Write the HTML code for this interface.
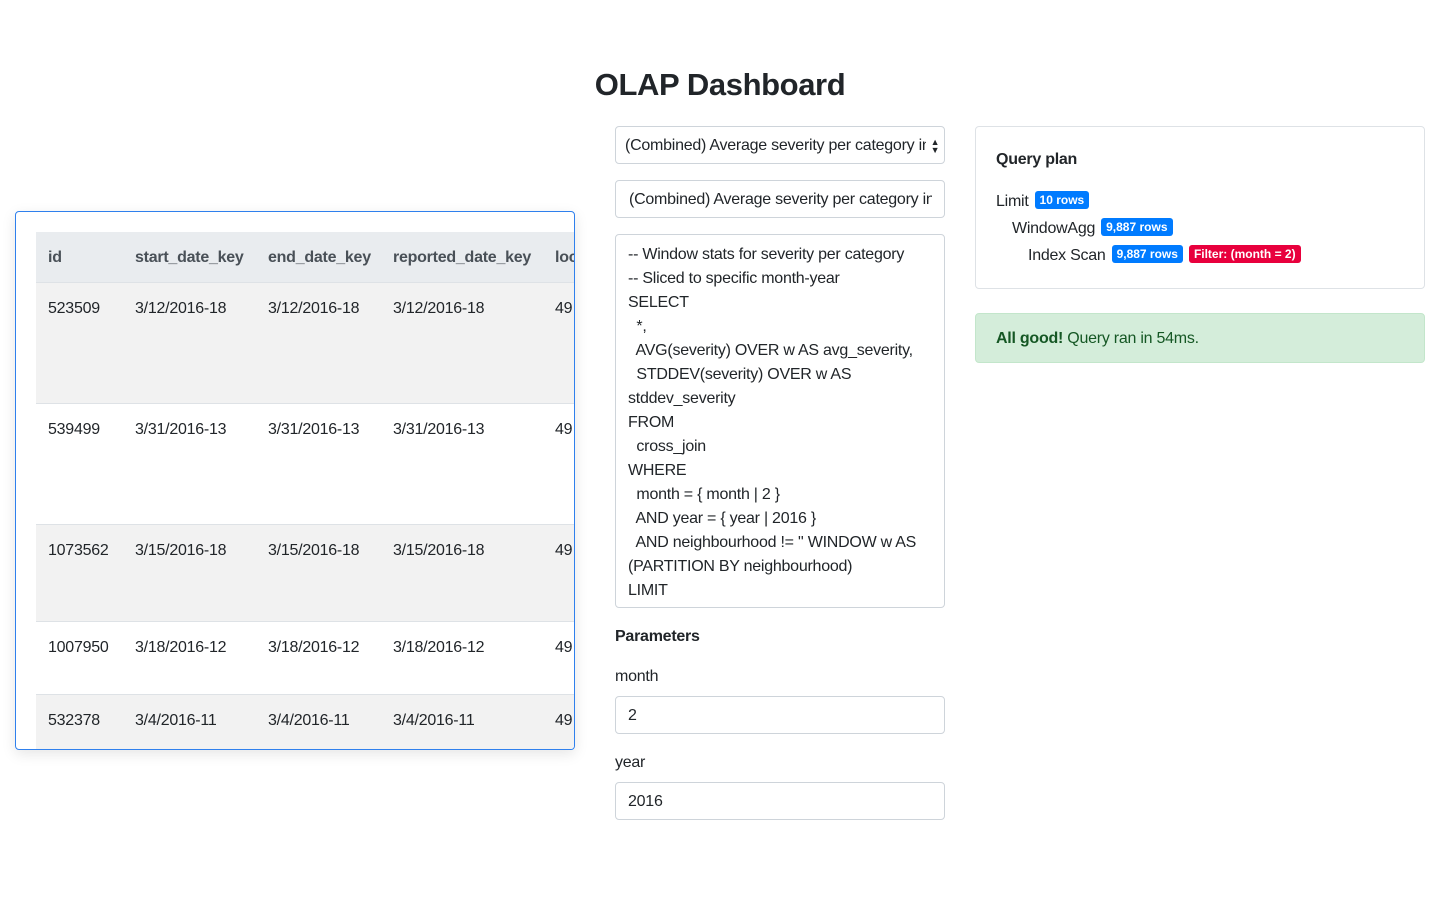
<!DOCTYPE html>
<html><head><style>
body{margin:0;width:1440px;height:900px;background:#fff;font-family:"Liberation Sans",Helvetica,sans-serif;color:#212529;font-size:16px;position:relative;overflow:hidden;letter-spacing:-0.25px}
.a{position:absolute}
h1{position:absolute;left:0;width:1440px;top:64px;margin:0;text-align:center;font-size:31px;font-weight:700;line-height:42px;letter-spacing:-0.4px}
.inp{position:absolute;left:615px;width:330px;border:1px solid #ced4da;border-radius:4px;box-sizing:border-box;padding:0 12px;line-height:38px;height:38px;white-space:nowrap;overflow:hidden;font-size:16px}
.inp .t{display:block;overflow:hidden}
.card{position:absolute;left:15px;top:211px;width:560px;height:539px;border:1px solid #2f80ed;border-radius:4px;box-sizing:border-box;box-shadow:0 4px 14px rgba(0,0,0,.1);overflow:hidden}
.row{position:absolute;left:20px;width:540px;border-top:1px solid #dee2e6}
.c{position:absolute;white-space:nowrap;top:17px}
.badge{display:inline-block;color:#fff;font-size:12px;font-weight:700;padding:0 5px;border-radius:3px;line-height:18px;vertical-align:2px;margin-left:6px;letter-spacing:0}
</style></head><body>
<h1>OLAP Dashboard</h1>
<div class="inp" style="top:126px;padding-left:9px"><span class="t" style="margin-right:6px">(Combined) Average severity per category in a specific month-year</span><span class="a" style="right:4px;top:0;width:10px;font-size:9px;line-height:8px;padding-top:11px;text-align:center">▲<br>▼</span></div>
<div class="inp" style="top:180px;padding-left:13px"><span class="t">(Combined) Average severity per category in a specific</span></div>
<div class="a" style="left:615px;top:234px;width:330px;height:374px;border:1px solid #ced4da;border-radius:4px;box-sizing:border-box;padding:8px 12px;line-height:24px;overflow:hidden;white-space:pre">-- Window stats for severity per category
-- Sliced to specific month-year
SELECT
  *,
  AVG(severity) OVER w AS avg_severity,
  STDDEV(severity) OVER w AS
stddev_severity
FROM
  cross_join
WHERE
  month = { month | 2 }
  AND year = { year | 2016 }
  AND neighbourhood != '' WINDOW w AS
(PARTITION BY neighbourhood)
LIMIT</div>
<div class="a" style="left:615px;top:628px;font-weight:700">Parameters</div>
<div class="a" style="left:615px;top:668px">month</div>
<div class="inp" style="top:696px">2</div>
<div class="a" style="left:615px;top:754px">year</div>
<div class="inp" style="top:782px">2016</div>

<div class="a" style="left:975px;top:126px;width:450px;height:163px;border:1px solid #dee2e6;border-radius:4px;box-sizing:border-box"></div>
<div class="a" style="left:996px;top:151px;font-weight:700">Query plan</div>
<div class="a" style="left:996px;top:191px">Limit<span class="badge" style="background:#007bff">10 rows</span></div>
<div class="a" style="left:1012px;top:218px">WindowAgg<span class="badge" style="background:#007bff">9,887 rows</span></div>
<div class="a" style="left:1028px;top:245px">Index Scan<span class="badge" style="background:#007bff">9,887 rows</span><span class="badge" style="background:#e8003d">Filter: (month = 2)</span></div>
<div class="a" style="left:975px;top:313px;width:450px;height:50px;background:#d4edda;border:1px solid #c3e6cb;border-radius:4px;box-sizing:border-box;color:#155724;line-height:50px;padding-left:20px"><b>All good!</b> Query ran in 54ms.</div>

<div class="card">
<div class="row" style="top:20px;height:50px;background:#e9ecef;border-bottom:2px solid #dee2e6;border-top:0;font-weight:700;color:#495057">
<span class="c" style="left:12px">id</span><span class="c" style="left:99px">start_date_key</span><span class="c" style="left:232px">end_date_key</span><span class="c" style="left:357px">reported_date_key</span><span class="c" style="left:519px">location</span></div>
<div class="row" style="top:70px;height:121px;background:#f2f2f2"><span class="c" style="left:12px">523509</span><span class="c" style="left:99px">3/12/2016-18</span><span class="c" style="left:232px">3/12/2016-18</span><span class="c" style="left:357px">3/12/2016-18</span><span class="c" style="left:519px">49</span></div>
<div class="row" style="top:191px;height:121px"><span class="c" style="left:12px">539499</span><span class="c" style="left:99px">3/31/2016-13</span><span class="c" style="left:232px">3/31/2016-13</span><span class="c" style="left:357px">3/31/2016-13</span><span class="c" style="left:519px">49</span></div>
<div class="row" style="top:312px;height:97px;background:#f2f2f2"><span class="c" style="left:12px">1073562</span><span class="c" style="left:99px">3/15/2016-18</span><span class="c" style="left:232px">3/15/2016-18</span><span class="c" style="left:357px">3/15/2016-18</span><span class="c" style="left:519px">49</span></div>
<div class="row" style="top:409px;height:73px"><span class="c" style="left:12px">1007950</span><span class="c" style="left:99px">3/18/2016-12</span><span class="c" style="left:232px">3/18/2016-12</span><span class="c" style="left:357px">3/18/2016-12</span><span class="c" style="left:519px">49</span></div>
<div class="row" style="top:482px;height:60px;background:#f2f2f2"><span class="c" style="left:12px">532378</span><span class="c" style="left:99px">3/4/2016-11</span><span class="c" style="left:232px">3/4/2016-11</span><span class="c" style="left:357px">3/4/2016-11</span><span class="c" style="left:519px">49</span></div>
</div>
</body></html>
